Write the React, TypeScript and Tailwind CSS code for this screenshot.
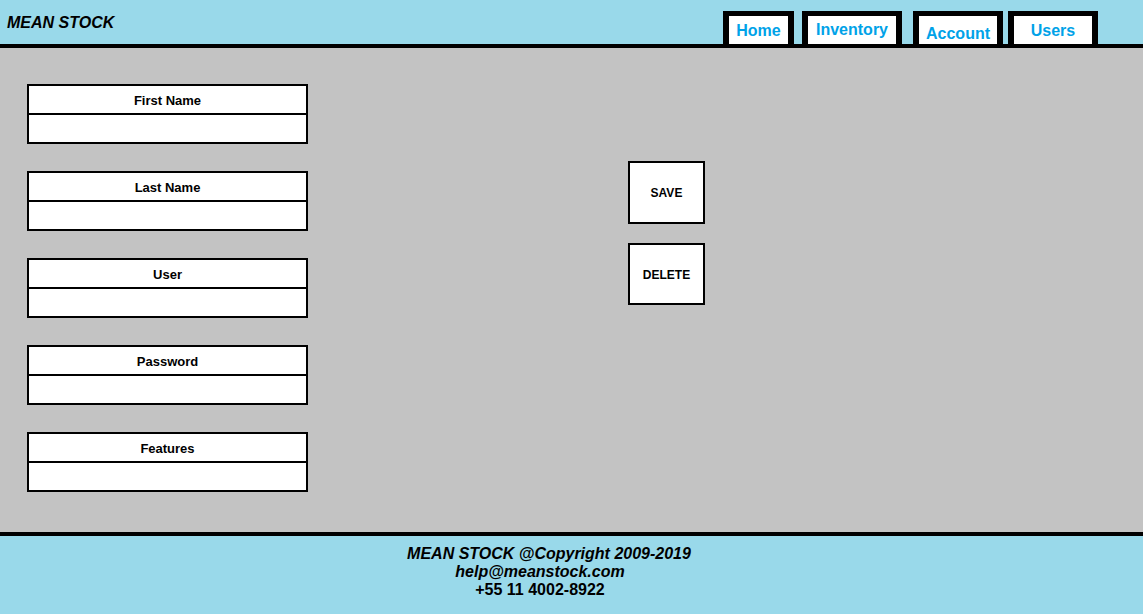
import React from 'react';

const FIELDS = ['First Name', 'Last Name', 'User', 'Password', 'Features'];

function Tab({ label, w, ml, shift }: { label: string; w: string; ml: string; shift: string }) {
  return (
    <div className={`${w} ${ml} h-[33px] mt-[11px] border-x-[6px] border-t-[5px] border-black bg-white`}>
      <div className={`h-[28px] leading-[28px] text-center text-[16px] font-bold text-[#00a2e8] ${shift}`}>{label}</div>
    </div>
  );
}

function Field({ label }: { label: string }) {
  return (
    <div className="w-[281px] h-[60px] border-2 border-black bg-white flex flex-col">
      <div className="h-[27px] pt-[2px] flex items-center justify-center text-[13px] font-bold text-black">{label}</div>
      <div className="h-[2px] bg-black" />
      <input className="h-[27px] w-full bg-white outline-none px-1 text-[13px]" />
    </div>
  );
}

export default function App() {
  return (
    <div className="w-[1143px] h-[614px] flex flex-col font-['Liberation_Sans',Arial,sans-serif] overflow-hidden">
      <header className="h-[48px] bg-[#99d9ea] border-b-4 border-black flex items-start">
        <div className="pl-[7px] pt-[14px] leading-[18px] text-[16px] font-bold italic text-black">MEAN STOCK</div>
        <nav className="ml-auto mr-[45px] flex">
          <Tab label="Home" w="w-[71px]" ml="ml-0" shift="translate-y-px" />
          <Tab label="Inventory" w="w-[100px]" ml="ml-[8px]" shift="" />
          <Tab label="Account" w="w-[90px]" ml="ml-[11px]" shift="translate-y-[4px]" />
          <Tab label="Users" w="w-[90px]" ml="ml-[5px]" shift="translate-y-px" />
        </nav>
      </header>

      <main className="h-[484px] bg-[#c3c3c3] flex">
        <div className="ml-[27px] pt-[36px] flex flex-col gap-[27px]">
          {FIELDS.map(f => <Field key={f} label={f} />)}
        </div>
        <div className="ml-[320px] mt-[113px] flex flex-col gap-[19px]">
          <button className="w-[77px] h-[63px] pt-px border-2 border-black bg-white text-[12px] font-bold text-black">SAVE</button>
          <button className="w-[77px] h-[62px] pt-px border-2 border-black bg-white text-[12px] font-bold text-black">DELETE</button>
        </div>
      </main>

      <footer className="flex-1 bg-[#99d9ea] border-t-4 border-black pt-[9px]">
        <div className="w-[1080px] text-center text-[16px] leading-[18px] font-bold text-black">
          <div className="italic pl-[18px]">MEAN STOCK @Copyright 2009-2019</div>
          <div className="italic">help@meanstock.com</div>
          <div>+55 11 4002-8922</div>
        </div>
      </footer>
    </div>
  );
}
